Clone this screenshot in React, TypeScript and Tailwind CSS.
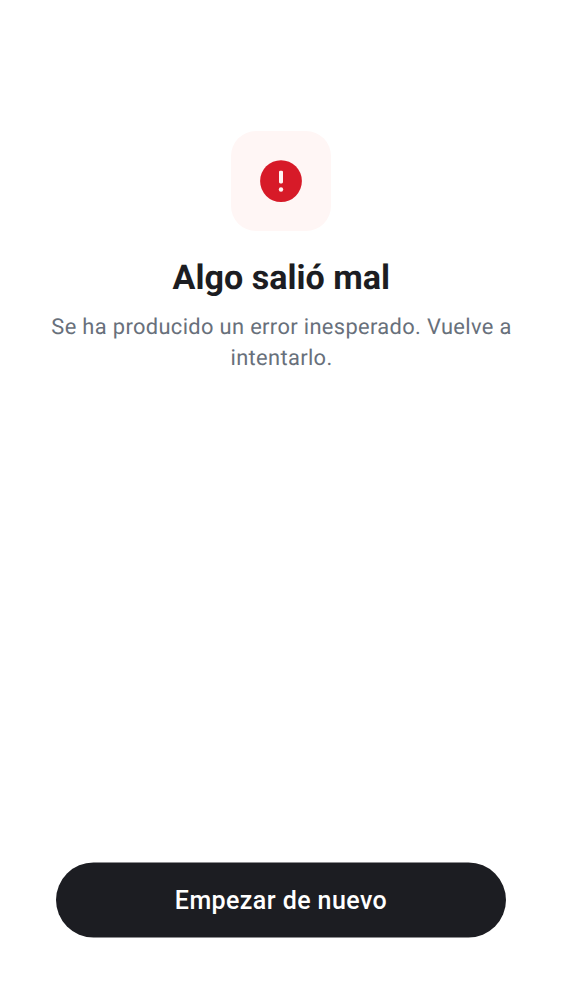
export default function App() {
  return (
    <main className="flex h-[1000px] w-full flex-col items-center bg-white px-[30px] pt-[131px] pb-[62px] font-['Roboto',sans-serif] [text-rendering:geometricPrecision]">
      <div className="flex size-[100px] items-center justify-center rounded-[25px] bg-[#fff6f5]">
        <svg className="size-[42px]" viewBox="0 0 42 42" aria-hidden="true">
          <circle cx="21" cy="21.1" r="20.9" fill="#d71a28" />
          <rect x="19" y="10.8" width="4" height="12.6" rx="1.3" fill="#fff5f5" />
          <circle cx="21" cy="29.5" r="2.2" fill="#fff5f5" />
        </svg>
      </div>
      <h1 className="mt-[25px] pl-[0.5px] text-[34.1px] leading-[44px] font-bold text-[#1c1d22]">Algo salió mal</h1>
      <p className="mt-[12px] w-full pl-[1px] text-center text-[21.86px] leading-[31px] tracking-[0.35px] text-[#68707b]">
        Se ha producido un error inesperado. Vuelve a intentarlo.
      </p>
      <button className="mt-auto h-[75px] w-[450px] -translate-y-[0.5px] rounded-full bg-[#1c1d22] pt-[1px] text-[25px] font-medium tracking-[0.42px] text-white">
        Empezar de nuevo
      </button>
    </main>
  );
}
